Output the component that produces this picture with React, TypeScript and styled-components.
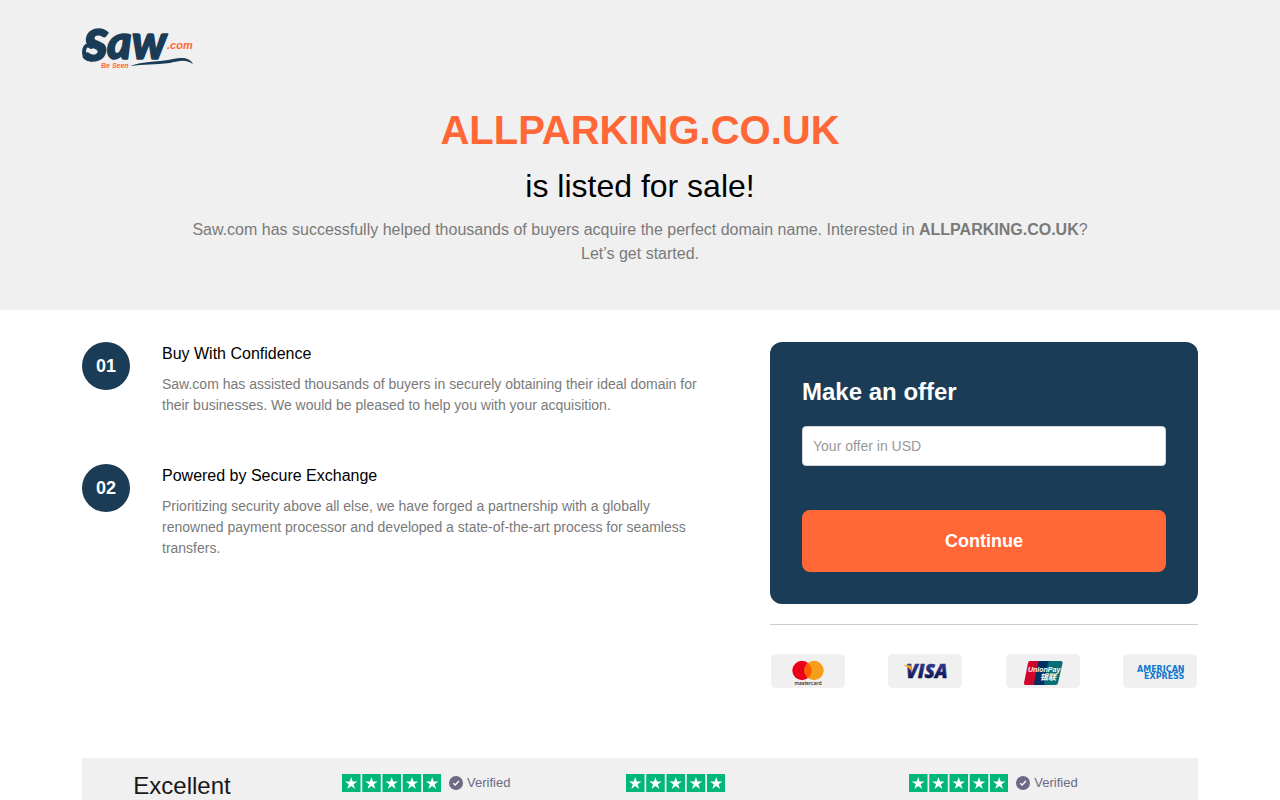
import React from "react";
import styled, { createGlobalStyle } from "styled-components";

const navy = "#1a3c56";
const orange = "#ff6737";
const mist = "#f0f0f0";

const GlobalStyle = createGlobalStyle`
  * { box-sizing: border-box; }
  body {
    margin: 0;
    background: #fff;
    color: #000;
    font-family: "Liberation Sans", Arial, sans-serif;
    font-size: 16px;
    line-height: 24px;
  }
  h1, h2, h3, p, ol, ul { margin: 0; padding: 0; font-weight: 400; }
`;

const Container = styled.div`
  max-width: 1140px;
  margin: 0 auto;
  padding: 0 12px;
`;

const Hero = styled.header`
  background: ${mist};
  padding: 24px 0 44px;
`;

const LogoLink = styled.a`
  display: block;
  width: 112px;
  svg { display: block; overflow: visible; }
`;

const HeroText = styled.div`
  max-width: 930px;
  margin: 0 auto;
  padding-top: 36px;
  text-align: center;
`;

const DomainName = styled.h1`
  color: ${orange};
  font-size: 40px;
  font-weight: 700;
  line-height: 48px;
`;

const SaleLine = styled.h2`
  margin: 12px 0;
  font-size: 32px;
  line-height: 40px;
`;

const Lead = styled.p`
  color: #7a7a7a;
`;

const Main = styled.main`
  display: grid;
  grid-template-columns: minmax(0, 3fr) minmax(0, 2fr);
  gap: 46px;
  padding: 32px 0 70px;
`;

const Steps = styled.ol`
  display: flex;
  flex-direction: column;
  gap: 48px;
  padding-right: 24px;
  list-style: none;
`;

const Step = styled.li`
  display: flex;
  gap: 32px;
`;

const StepNumber = styled.span`
  flex: none;
  width: 48px;
  height: 48px;
  border-radius: 50%;
  background: ${navy};
  color: #fff;
  font-size: 18px;
  font-weight: 700;
  line-height: 48px;
  text-align: center;
`;

const StepTitle = styled.h3`
  margin-bottom: 8px;
  font-size: 16px;
  line-height: 24px;
`;

const StepText = styled.p`
  color: #7a7a7a;
  font-size: 14px;
  line-height: 21px;
`;

const OfferForm = styled.form`
  display: flex;
  flex-direction: column;
  padding: 32px;
  border-radius: 12px;
  background: ${navy};
`;

const OfferTitle = styled.label`
  margin-bottom: 16px;
  color: #fff;
  font-size: 24px;
  font-weight: 700;
  line-height: 36px;
`;

const OfferInput = styled.input`
  height: 40px;
  margin-bottom: 44px;
  padding: 0 10px;
  border: 1px solid #ced4da;
  border-radius: 4px;
  background: #fff;
  font-family: inherit;
  font-size: 14px;
  &::placeholder { color: #999; opacity: 1; }
`;

const ContinueButton = styled.button`
  height: 62px;
  border: 0;
  border-radius: 8px;
  background: ${orange};
  color: #fff;
  font-family: inherit;
  font-size: 18px;
  font-weight: 700;
  cursor: pointer;
`;

const Payments = styled.ul`
  display: flex;
  justify-content: space-between;
  margin-top: 20px;
  padding: 29px 1px 0;
  border-top: 1px solid #ccc;
  list-style: none;
`;

const PaymentCard = styled.li`
  width: 74px;
  height: 34px;
  border-radius: 5px;
  background: ${mist};
  svg { display: block; }
`;

const Trust = styled.section`
  display: flex;
  gap: 60px;
  padding-right: 5px;
  background: ${mist};
`;

const Rating = styled.h2`
  flex: none;
  width: 200px;
  padding: 10px 0 8px;
  color: #191919;
  font-size: 24px;
  line-height: 36px;
  text-align: center;
`;

const Reviews = styled.ul`
  flex: 1;
  display: grid;
  grid-template-columns: repeat(3, minmax(0, 1fr));
  padding-top: 16px;
  list-style: none;
`;

const Review = styled.li`
  display: flex;
  align-items: center;
  height: 18px;
  gap: 8px;
`;

const Verified = styled.span`
  display: flex;
  align-items: center;
  gap: 4px;
  color: #6c6a85;
  font-size: 13px;
  line-height: 18px;
`;

function SawLogo() {
  return (
    <svg width="112" height="46" viewBox="0 0 112 46" role="img" aria-label="Saw.com, Be Seen">
      <g fontFamily="Lato, sans-serif" fontStyle="italic" fontWeight="900" fill={navy} stroke={navy} strokeWidth="1.5" strokeLinejoin="round">
        <text x="2" y="37" fontSize="60">s</text>
        <text x="25" y="35" fontSize="47">aw</text>
      </g>
      <path d="M9 23C4 19 2 24 2 28C2 34 6 36 10 35" fill="none" stroke={navy} strokeWidth="4" strokeLinecap="round" />
      <g fontFamily="Liberation Sans, sans-serif" fontStyle="italic" fontWeight="700" fill={orange}>
        <text x="85" y="25" fontSize="11">.com</text>
        <text x="19" y="44" fontSize="7">Be Seen</text>
      </g>
      <path d="M48 42C60 37 78 38 91 35C101 33 108 34 111 40C103 35 98 37 88 39C73 41 62 40 48 42Z" fill={navy} />
    </svg>
  );
}

function Mastercard() {
  return (
    <svg width="74" height="34" viewBox="0 0 74 34" role="img" aria-label="Mastercard">
      <circle cx="31" cy="16.5" r="9.7" fill="#eb001b" />
      <circle cx="43" cy="16.5" r="9.7" fill="#f79e1b" />
      <path d="M37 8.9A9.7 9.7 0 0 1 37 24.1A9.7 9.7 0 0 1 37 8.9Z" fill="#ff5f00" />
      <text x="37" y="31" textAnchor="middle" fontFamily="Inter, sans-serif" fontSize="5" fontWeight="500" fill="#222">mastercard</text>
    </svg>
  );
}

function Visa() {
  return (
    <svg width="74" height="34" viewBox="0 0 74 34" role="img" aria-label="Visa">
      <defs>
        <linearGradient id="visa" x1="0" y1="0" x2="0" y2="1">
          <stop offset="0.3" stopColor="#293688" />
          <stop offset="0.8" stopColor="#0b1450" />
        </linearGradient>
      </defs>
      <text x="18" y="24" fontFamily="Open Sans, sans-serif" fontSize="19" fontStyle="italic" fontWeight="800"
        fill="url(#visa)" stroke="url(#visa)" strokeWidth="0.4">VISA</text>
      <path d="M14.5 11.3H21C22.2 11.3 22.7 11.9 22.9 12.7L24.3 19C22.5 15 19.5 12.4 14.5 11.3Z" fill="#f7a51c" />
    </svg>
  );
}

function UnionPay() {
  return (
    <svg width="74" height="34" viewBox="0 -1 74 34" role="img" aria-label="UnionPay">
      <path d="M23 6H35L29 30H19.5Q17.6 30 18 28L22 8Q22.4 6 24 6Z" fill="#d10429" />
      <path d="M33 6H47L41 30H29Q27.6 30 28 28L32 8Q32.4 6 34 6Z" fill="#022e64" />
      <path d="M44 6H55Q57 6 56.6 8L52 28Q51.5 30 49.5 30H39Q37.6 30 38 28L42 8Q42.4 6 44 6Z" fill="#076f74" />
      <text x="22" y="17" fontFamily="Liberation Sans, sans-serif" fontSize="7" fontStyle="italic" fontWeight="700" fill="#fff">UnionPay</text>
      <text x="34" y="25" fontFamily="Noto Sans CJK SC, sans-serif" fontSize="8" fontStyle="italic" fontWeight="700" fill="#fff">银联</text>
    </svg>
  );
}

function Amex() {
  return (
    <svg width="74" height="34" viewBox="0 0 74 34" role="img" aria-label="American Express">
      <g fontFamily="DejaVu Sans, sans-serif" fontSize="8" fontWeight="700" fill="#0f78cf">
        <text x="14" y="18">AMERICAN</text>
        <text x="21" y="25">EXPRESS</text>
      </g>
    </svg>
  );
}

const tiles = [0, 1, 2, 3, 4];

function Stars() {
  return (
    <svg width="99" height="18" viewBox="0 0 99 18" role="img" aria-label="5 out of 5 stars">
      {tiles.map((n) => (
        <g key={n} transform={`translate(${n * 20.25} 0)`}>
          <rect width="18.5" height="18" fill="#00b67a" />
          <path d="M9.2 3L10.7 7.5H15.5L11.6 10.3L13.1 15L9.2 12.1L5.3 15L6.8 10.3L2.9 7.5H7.7Z" fill="#fff" />
        </g>
      ))}
    </svg>
  );
}

function VerifiedMark() {
  return (
    <Verified>
      <svg width="14" height="14" viewBox="0 0 14 14" aria-hidden="true">
        <circle cx="7" cy="7" r="7" fill="#6c6a85" />
        <path d="M4.2 7.2L6.2 9L9.9 5" fill="none" stroke="#fff" strokeWidth="1.4" />
      </svg>
      Verified
    </Verified>
  );
}

const steps = [
  {
    number: "01",
    title: "Buy With Confidence",
    text: "Saw.com has assisted thousands of buyers in securely obtaining their ideal domain for their businesses. We would be pleased to help you with your acquisition.",
  },
  {
    number: "02",
    title: "Powered by Secure Exchange",
    text: "Prioritizing security above all else, we have forged a partnership with a globally renowned payment processor and developed a state-of-the-art process for seamless transfers.",
  },
];

const reviews = [{ verified: true }, { verified: false }, { verified: true }];

export default function App() {
  return (
    <>
      <GlobalStyle />
      <Hero>
        <Container>
          <LogoLink href="#"><SawLogo /></LogoLink>
          <HeroText>
            <DomainName>ALLPARKING.CO.UK</DomainName>
            <SaleLine>is listed for sale!</SaleLine>
            <Lead>
              Saw.com has successfully helped thousands of buyers acquire the perfect domain name. Interested in{" "}
              <strong>ALLPARKING.CO.UK</strong>? Let’s get started.
            </Lead>
          </HeroText>
        </Container>
      </Hero>
      <Container>
        <Main>
          <Steps>
            {steps.map((s) => (
              <Step key={s.number}>
                <StepNumber>{s.number}</StepNumber>
                <div>
                  <StepTitle>{s.title}</StepTitle>
                  <StepText>{s.text}</StepText>
                </div>
              </Step>
            ))}
          </Steps>
          <div>
            <OfferForm onSubmit={(e: React.FormEvent) => e.preventDefault()}>
              <OfferTitle htmlFor="offer">Make an offer</OfferTitle>
              <OfferInput id="offer" type="text" inputMode="numeric" placeholder="Your offer in USD" />
              <ContinueButton type="submit">Continue</ContinueButton>
            </OfferForm>
            <Payments>
              <PaymentCard><Mastercard /></PaymentCard>
              <PaymentCard><Visa /></PaymentCard>
              <PaymentCard><UnionPay /></PaymentCard>
              <PaymentCard><Amex /></PaymentCard>
            </Payments>
          </div>
        </Main>
        <Trust>
          <Rating>Excellent</Rating>
          <Reviews>
            {reviews.map((r, i) => (
              <Review key={i}>
                <Stars />
                {r.verified && <VerifiedMark />}
              </Review>
            ))}
          </Reviews>
        </Trust>
      </Container>
    </>
  );
}
